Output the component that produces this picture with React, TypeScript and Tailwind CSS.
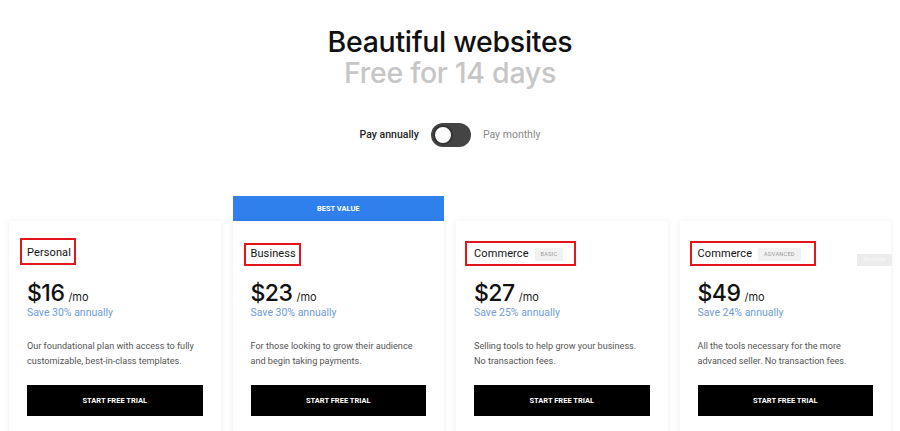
const plans = [
  {
    name: "Personal",
    tag: "",
    price: "$16",
    save: "Save 30% annually",
    desc: ["Our foundational plan with access to fully", "customizable, best-in-class templates."],
    box: "-ml-[7px] mt-[17px] h-[27px] pt-[3px] pr-[3px]",
    badge: false,
  },
  {
    name: "Business",
    tag: "",
    price: "$23",
    save: "Save 30% annually",
    desc: ["For those looking to grow their audience", "and begin taking payments."],
    box: "-ml-[7px] mt-[22px] h-[23px] pr-[3px]",
    badge: true,
  },
  {
    name: "Commerce",
    tag: "BASIC",
    price: "$27",
    save: "Save 25% annually",
    desc: ["Selling tools to help grow your business.", "No transaction fees."],
    box: "-ml-[9px] mt-[20px] h-[25px] pt-[1px] pr-[11px] pl-[7px]",
    badge: false,
  },
  {
    name: "Commerce",
    tag: "ADVANCED",
    price: "$49",
    save: "Save 24% annually",
    desc: ["All the tools necessary for the more", "advanced seller. No transaction fees."],
    box: "-ml-[8px] mt-[20px] h-[25px] pt-[1px] pr-[13px] pl-[6px]",
    badge: false,
  },
];

export default function App() {
  return (
    <div className="min-h-[431px] w-full overflow-hidden bg-white font-['Inter',sans-serif] text-[#111]">
      <div className="pt-[26px] text-center">
        <h1 className="text-[28.5px] font-medium leading-[31px] tracking-[-0.3px]">Beautiful websites</h1>
        <p className="text-[28.5px] font-medium leading-[31px] tracking-[-0.3px] text-[#c6c6c6]">Free for 14 days</p>
      </div>

      <div className="mt-[35px] flex items-center justify-center gap-[12px]">
        <span className="whitespace-nowrap font-['Roboto',sans-serif] text-[10.5px] font-medium text-[#222]">Pay annually</span>
        <div className="flex h-[24px] w-[40px] items-center rounded-full bg-[#444] p-[2px]">
          <div className="h-[20px] w-[20px] rounded-full border-[2px] border-[#333] bg-white" />
        </div>
        <span className="whitespace-nowrap font-['Roboto',sans-serif] text-[10.5px] text-[#888]">Pay monthly</span>
      </div>

      <div className="mt-[49px] grid grid-cols-4 gap-[12px] px-[9px] font-['Roboto',sans-serif]">
        {plans.map((p, i) => (
          <div key={i} className="flex flex-col">
            <div className="h-[25px]">
              {p.badge && (
                <div className="flex h-[25px] items-center justify-center bg-[#2f80ed] text-[7.5px] font-bold text-white">
                  BEST VALUE
                </div>
              )}
            </div>
            <div className="relative h-[230px] bg-white px-[18px] shadow-[0_0_6px_rgba(0,0,0,0.07)]">
              <div className="flex h-[49px] flex-col items-start">
                <div className={`flex items-center gap-[6px] border-[2px] border-[#e3161b] pl-[5px] ${p.box}`}>
                  <span className="text-[11px] tracking-[0.1px] text-[#111]">{p.name}</span>
                  {p.tag && (
                    <span className="flex h-[13px] items-center bg-[#f1f1f1] px-[6px] text-[5.5px] tracking-[0.3px] text-[#999]">
                      {p.tag}
                    </span>
                  )}
                </div>
              </div>
              <div className="mt-[10px] flex items-baseline font-['Inter',sans-serif]">
                <span className="text-[23px] font-medium leading-[26px] tracking-[-0.5px]">{p.price}</span>
                <span className="ml-[4px] text-[11px] text-[#222]">/mo</span>
              </div>
              <p className="text-[10.5px] leading-[14px] text-[#6f9bdb]">{p.save}</p>
              <div className="mt-[19px] text-[9.1px] leading-[15px] text-[#555]">
                {p.desc.map((d, j) => (
                  <p key={j} className="whitespace-nowrap">{d}</p>
                ))}
              </div>
              <button className="mt-[16px] flex h-[31px] w-full items-center justify-center bg-black text-[7.5px] font-bold text-white">
                START FREE TRIAL
              </button>
              {i === 3 && (
                <div className="absolute right-[-1px] top-[33px] flex h-[12px] w-[35px] items-center justify-center bg-[#ececec] text-[5px] text-[#f8f8f8]">
                  Rectangle
                </div>
              )}
            </div>
          </div>
        ))}
      </div>
    </div>
  );
}
